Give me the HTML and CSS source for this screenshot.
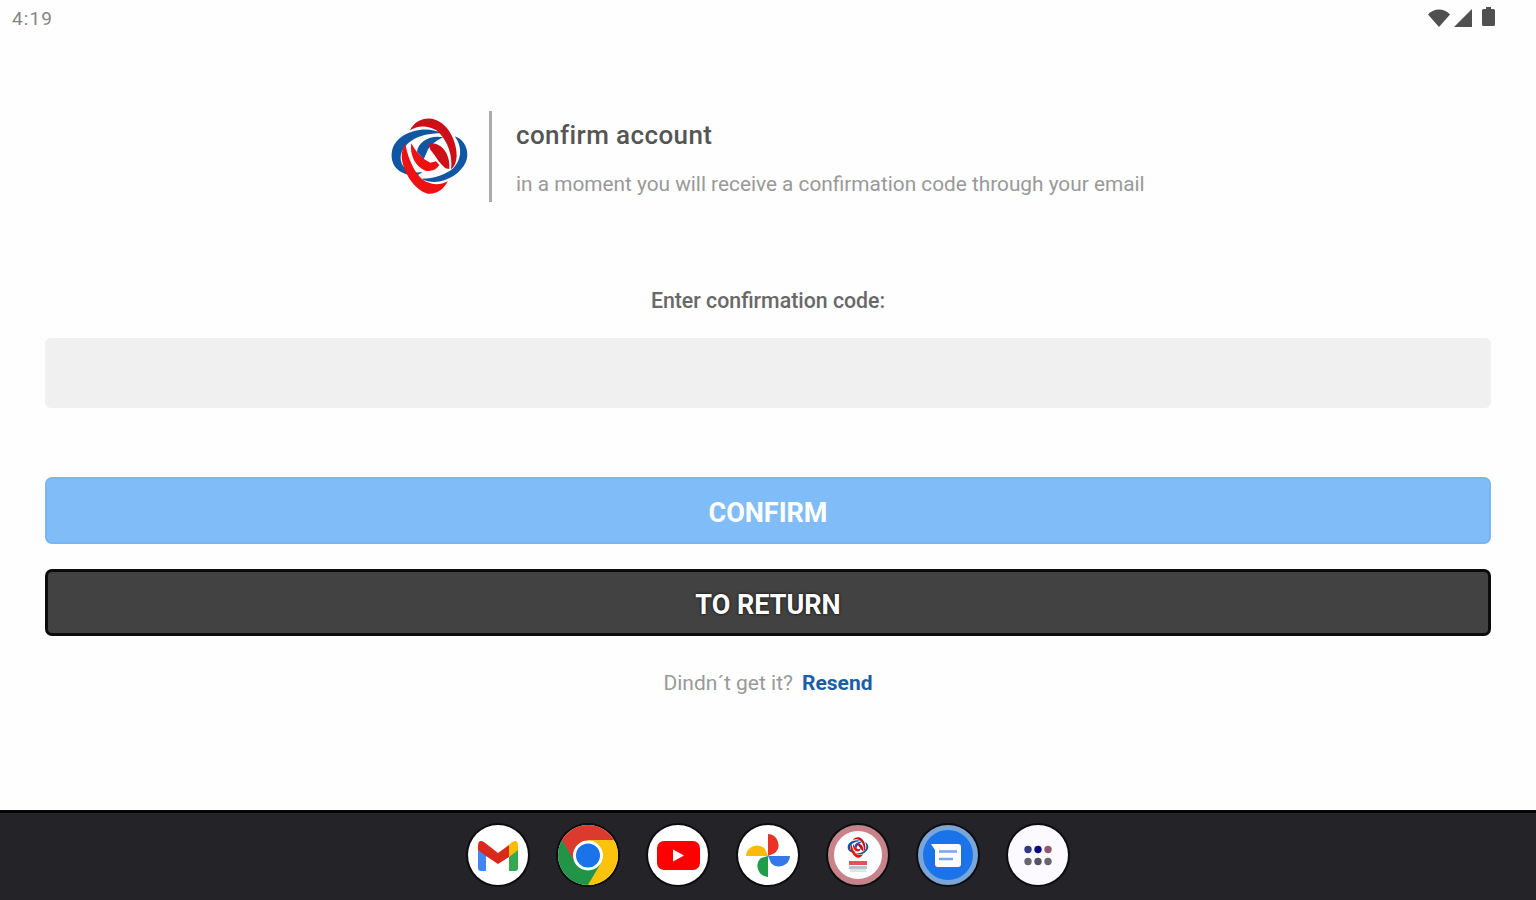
FILE: index.html
```html
<!DOCTYPE html>
<html lang="en">
<head>
  <meta charset="UTF-8" />
  <meta name="viewport" content="width=device-width, initial-scale=1.0"/>
  <title>Confirm account</title>
  <link rel="stylesheet" href="styles.css">
</head>
<body>

  <header class="status-bar">
    <span class="clock">4:19</span>
    <div class="status-icons">
      <svg class="wifi" width="22" height="18" viewBox="0 0 22 18"><path d="M0 5.500C6-1.200 16-1.200 22 5.500L11 18z"/></svg>
      <svg class="signal" width="18" height="18" viewBox="0 0 18 18"><path d="M18 0v18H0z"/></svg>
      <svg class="battery" width="13" height="19" viewBox="0 0 13 19"><path d="M4 0h5v2h2.500q1.500 0 1.500 1.500v14q0 1.500-1.500 1.500h-10q-1.500 0-1.500-1.500v-14q0-1.500 1.500-1.500h2.500z"/></svg>
    </div>
  </header>

  <main class="content">
    <div class="intro">
      <svg class="logo" width="79" height="77" viewBox="30 36 237 231">
        <g id="swirl">
          <path class="blue" d="M184 82C150 62 100 70 68 90C36 110 31 142 37 165C44 192 74 212 114 207L128 198C92 203 74 192 65 172C56 145 68 124 92 106C116 89 148 82 184 82z"/>
          <path class="blue" d="M224 91C248 98 263 122 262 149C260 178 233 208 195 222C170 231 145 229 124 218C165 218 198 204 218 188C243 166 250 125 224 91z"/>
          <path class="blue" d="M190 94C152 86 114 106 111 138L131 160L141 137C148 120 165 105 190 94z"/>
          <path class="dark-red" d="M90 73C105 42 139 31 168 42C204 55 231 105 230 151Q229 178 213 190C219 146 200 98 169 73C143 57 112 58 90 73z"/>
          <path class="red" d="M76 113C86 168 112 217 143 229C163 238 184 236 203 226C192 250 169 266 143 263C104 254 67 196 65 151Q66 126 76 113z"/>
          <path class="red" d="M94 112C88 146 106 182 136 194Q164 199 178 177L168 166L151 170L133 160Q108 140 94 112z"/>
          <path class="dark-red" d="M146 112C186 106 212 146 208 189L196 187Q186 178 176 166L165 149L150 130z"/>
        </g>
      </svg>
      <div class="intro-text">
        <h1>confirm account</h1>
        <p>in a moment you will receive a confirmation code through your email</p>
      </div>
    </div>

    <form class="code-form">
      <label for="code">Enter confirmation code:</label>
      <input type="text" id="code">
      <button type="button" class="btn btn-confirm">CONFIRM</button>
      <button type="button" class="btn btn-return">TO RETURN</button>
    </form>

    <p class="resend"><span>Dindn´t get it?</span><a href="#">Resend</a></p>
  </main>

  <nav class="dock">
    <a class="app" href="#" aria-label="Gmail">
      <svg viewBox="0 0 60 60">
        <path fill="#4285f4" d="M10 21l8 6v19h-5q-3 0-3-3z"/>
        <path fill="#34a853" d="M41 27l9-6v22q0 3-3 3h-6z"/>
        <path fill="#fbbc04" d="M41 20l3-3q6-3 6 4v4l-9 7z"/>
        <path fill="#d9291c" d="M10 25v-4q0-7 6-4l14 11 11-8v12l-11 7-12-8z"/>
      </svg>
    </a>
    <a class="app" href="#" aria-label="Chrome">
      <svg viewBox="0 0 60 60">
        <path fill="#fbc30b" d="M30 15h30v45H30L43 37z"/>
        <path fill="#219447" d="M4 15H0v45h30L43 38 30 30z"/>
        <path fill="#db3a2e" d="M4 15V0h56v15H30v15L17 37z"/>
        <circle cx="30" cy="30.500" r="15" fill="#fff"/>
        <circle cx="30" cy="30.500" r="12" fill="#1a73e8"/>
      </svg>
    </a>
    <a class="app" href="#" aria-label="YouTube">
      <svg viewBox="0 0 60 60">
        <rect x="9" y="16" width="43" height="29" rx="7" fill="#f00"/>
        <path fill="#fff" d="M25 24.500l11 6-11 6z"/>
      </svg>
    </a>
    <a class="app" href="#" aria-label="Photos">
      <svg viewBox="0 0 60 60">
        <path fill="#ea3325" d="M30 9a11 11 0 0 1 7 19L30 31z"/>
        <path fill="#fbb90b" d="M8 31a11 11 0 0 1 19-7L30 31z"/>
        <path fill="#1f9d48" d="M30 31V52a11 11 0 0 1-7-19z"/>
        <path fill="#3478ea" d="M30 31h22a11 11 0 0 1-19 7z"/>
      </svg>
    </a>
    <a class="app app-own" href="#" aria-label="Account">
      <svg viewBox="0 0 60 60">
        <svg x="19" y="12" width="22" height="21" viewBox="30 36 237 231"><use href="#swirl"/></svg>
        <rect x="21" y="36" width="18" height="4" fill="#e0535a"/>
        <rect x="21" y="41" width="18" height="3" fill="#b7c2cd"/>
        <rect x="22" y="44" width="16" height="3" fill="#dfe4e9"/>
      </svg>
    </a>
    <a class="app app-messages" href="#" aria-label="Messages">
      <svg viewBox="0 0 60 60">
        <path fill="#fff" d="M13 19h27q3 0 3 3v17q0 3-3 3H20q-3 0-3-3V25z"/>
        <path stroke="#75a7ef" stroke-width="2.500" d="M21 26.500h18M21 34h14"/>
      </svg>
    </a>
    <a class="app app-drawer" href="#" aria-label="All apps">
      <svg viewBox="0 0 60 60">
        <circle cx="20" cy="24.500" r="3.700" fill="#31398a"/>
        <circle cx="30" cy="24.500" r="3.700" fill="#0b087c"/>
        <circle cx="40" cy="24.500" r="3.700" fill="#8e5870"/>
        <circle cx="20" cy="36.500" r="3.700" fill="#66666f"/>
        <circle cx="30" cy="36.500" r="3.700" fill="#535365"/>
        <circle cx="40" cy="36.500" r="3.700" fill="#66666f"/>
      </svg>
    </a>
  </nav>

</body>
</html>
```
FILE: styles.css
```css
* {
  box-sizing: border-box;
}

body {
  display: flex;
  flex-direction: column;
  height: 100vh;
  margin: 0;
  background: #fefefe;
  font-family: Roboto, sans-serif;
  overflow: hidden;
}

h1,
p {
  margin: 0;
}

a {
  text-decoration: none;
}

/* Status bar */
.status-bar {
  display: flex;
  justify-content: space-between;
  height: 40px;
  padding: 8px 41px 0 12px;
}

.clock {
  color: #858585;
  font-size: 19px;
  line-height: 22px;
  letter-spacing: 1.1px;
}

.status-icons {
  display: flex;
  fill: #505050;
}

.wifi {
  margin-top: 1px;
}
.signal {
  margin: 1px 10px 0 4px;
}
.battery {
  margin-top: -1px;
}

/* Main content */
.content {
  flex: 1;
  padding: 71px 45px 0;
}

.intro {
  display: flex;
  width: 756px;
  margin: 0 auto;
}

.logo {
  flex-shrink: 0;
  margin: 7px 20px 0 0;
}
.blue {
  fill: #0f56a3;
}
.red {
  fill: #ee1111;
}
.dark-red {
  fill: #cb1018;
}

.intro-text {
  height: 91px;
  padding: 9px 0 0 24px;
  border-left: 3px solid #aaa;
  white-space: nowrap;
}
.intro-text h1 {
  color: #555;
  font-size: 26px;
  font-weight: 500;
  line-height: 31px;
  letter-spacing: 0.4px;
}
.intro-text p {
  margin-top: 20px;
  color: #999;
  font-size: 20.8px;
  line-height: 26px;
}

/* Form */
.code-form {
  display: flex;
  flex-direction: column;
}
.code-form label {
  margin-top: 86px;
  color: #686868;
  font-size: 21.3px;
  font-weight: 500;
  line-height: 26px;
  text-align: center;
}
.code-form input {
  height: 70px;
  margin: 24px 0 69px;
  padding: 0 20px;
  border: none;
  border-radius: 6px;
  background: #f0f0f0;
  font: inherit;
  font-size: 22px;
}

.btn {
  height: 67px;
  padding: 4px 0 0;
  border-radius: 7px;
  color: #fff;
  font-family: inherit;
  font-size: 27px;
  font-weight: bold;
}
.btn-confirm {
  border: 2px solid #77b5f4;
  background: #80bdf8;
}
.btn-return {
  margin-top: 25px;
  border: 3px solid #0c0c0c;
  background: #424242;
  text-shadow: 0 0 3px #000;
}

.resend {
  display: flex;
  justify-content: center;
  gap: 9px;
  margin-top: 34px;
  color: #999;
  font-size: 21px;
  line-height: 26px;
}
.resend a {
  color: #1c5ea6;
  font-weight: bold;
}

/* Dock */
.dock {
  display: flex;
  justify-content: center;
  gap: 30px;
  height: 90px;
  padding-top: 12px;
  border-top: 3px solid #050505;
  background: #242328;
}

.app {
  width: 60px;
  height: 60px;
  border-radius: 50%;
  background: #fff;
  box-shadow: 0 0 0 2px #0d0d10;
  overflow: hidden;
}
.app svg {
  display: block;
}
.app-own {
  border: 6px solid #c7838a;
}
.app-messages {
  border: 5px solid #7aa5d8;
  background: #1a73e8;
}
.app-own > svg,
.app-messages > svg {
  width: 60px;
  height: 60px;
}
.app-own > svg {
  margin: -6px;
}
.app-messages > svg {
  margin: -5px;
}
.app-drawer {
  background: #fcfaff;
}
```
